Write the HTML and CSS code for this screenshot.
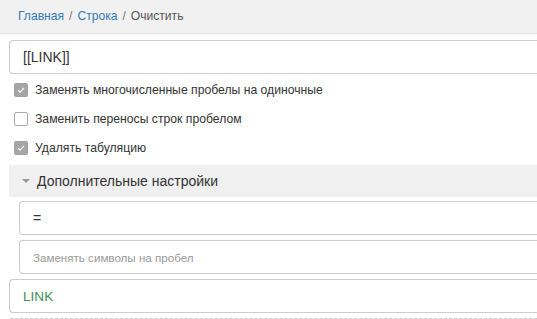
FILE: index.html
```html
<!DOCTYPE html>
<html lang="ru">
<head>
<meta charset="utf-8">
<link rel="stylesheet" href="styles.css">
</head>
<body>
<header class="topbar">
  <nav class="crumbs">
    <a class="crumb-link" href="#">Главная</a>
    <span class="sep">/</span>
    <a class="crumb-link" href="#">Строка</a>
    <span class="sep">/</span>
    <span class="crumb-current">Очистить</span>
  </nav>
</header>
<main class="content">
  <div class="field field-main">[[LINK]]</div>
  <div class="checks">
    <label class="check"><span class="box checked"><svg viewBox="0 0 14 14" width="14" height="14"><path d="M3.5 7.2 L6 9.6 L10.5 4.6" fill="none" stroke="#fff" stroke-width="1.4"/></svg></span>Заменять многочисленные пробелы на одиночные</label>
    <label class="check"><span class="box"></span>Заменить переносы строк пробелом</label>
    <label class="check"><span class="box checked"><svg viewBox="0 0 14 14" width="14" height="14"><path d="M3.5 7.2 L6 9.6 L10.5 4.6" fill="none" stroke="#fff" stroke-width="1.4"/></svg></span>Удалять табуляцию</label>
  </div>
  <div class="section">
    <div class="section-head"><span class="tri"></span>Дополнительные настройки</div>
    <div class="section-body">
      <div class="field field-sub">=</div>
      <div class="field field-sub placeholder">Заменять символы на пробел</div>
    </div>
  </div>
  <div class="field field-result">LINK</div>
  <div class="dashed"></div>
</main>
</body>
</html>
```
FILE: styles.css
```css
* { box-sizing: border-box; }
html, body { margin: 0; padding: 0; }
body {
  font-family: "Liberation Sans", Arial, sans-serif;
  color: #333;
  background: #fff;
  width: 537px;
  height: 319px;
  overflow: hidden;
}
.topbar {
  height: 34px;
  background: #f1f1f1;
  border-bottom: 1px solid #e3e3e3;
  box-shadow: 0 1px 2px rgba(0,0,0,0.04);
  display: flex;
  align-items: center;
  padding-left: 18px;
  padding-bottom: 1px;
}
.crumbs {
  font-size: 12.1px;
  display: flex;
  gap: 5px;
  align-items: baseline;
}
.crumb-link { color: #337ab7; text-decoration: none; }
.sep { color: #777; }
.crumb-current { color: #555; }

.content {
  padding: 6px 0 0 9px;
}
.field {
  height: 34px;
  border: 1px solid #ccc;
  border-radius: 4px;
  border-right: none;
  border-top-right-radius: 0;
  border-bottom-right-radius: 0;
  display: flex;
  align-items: center;
  background: #fff;
}
.field-main {
  font-size: 14px;
  padding-left: 13px;
  color: #333;
}
.checks {
  display: flex;
  flex-direction: column;
  gap: 14px;
  padding: 8px 0 0 5px;
}
.check {
  display: flex;
  align-items: center;
  gap: 7px;
  font-size: 12.2px;
  color: #333;
  height: 15px;
}
.box {
  width: 14px;
  height: 14px;
  border: 1px solid #aaa;
  border-radius: 2px;
  background: #fff;
  display: flex;
  align-items: center;
  justify-content: center;
  flex: none;
}
.box.checked {
  background: #a6a6a6;
  border-color: #a0a0a0;
}
.box svg { display: block; }
.section {
  margin-top: 10px;
}
.section-head {
  height: 32px;
  background: #f0f0f0;
  display: flex;
  align-items: center;
  font-size: 14px;
  color: #333;
  padding-left: 13px;
  gap: 7px;
}
.tri {
  width: 0;
  height: 0;
  border-left: 4px solid transparent;
  border-right: 4px solid transparent;
  border-top: 4px solid #999;
}
.section-body {
  padding: 4px 0 0 10px;
  display: flex;
  flex-direction: column;
  gap: 5px;
}
.field-sub {
  padding-left: 13px;
  font-size: 14px;
  color: #333;
}
.placeholder {
  font-size: 11.6px;
  color: #999;
}
.field-result {
  margin-top: 5px;
  padding-left: 13px;
  font-size: 13.6px;
  color: #3f9060;
}
.dashed {
  margin: 5px 0 0 1px;
  border-top: 1px dashed #ccc;
}
```
